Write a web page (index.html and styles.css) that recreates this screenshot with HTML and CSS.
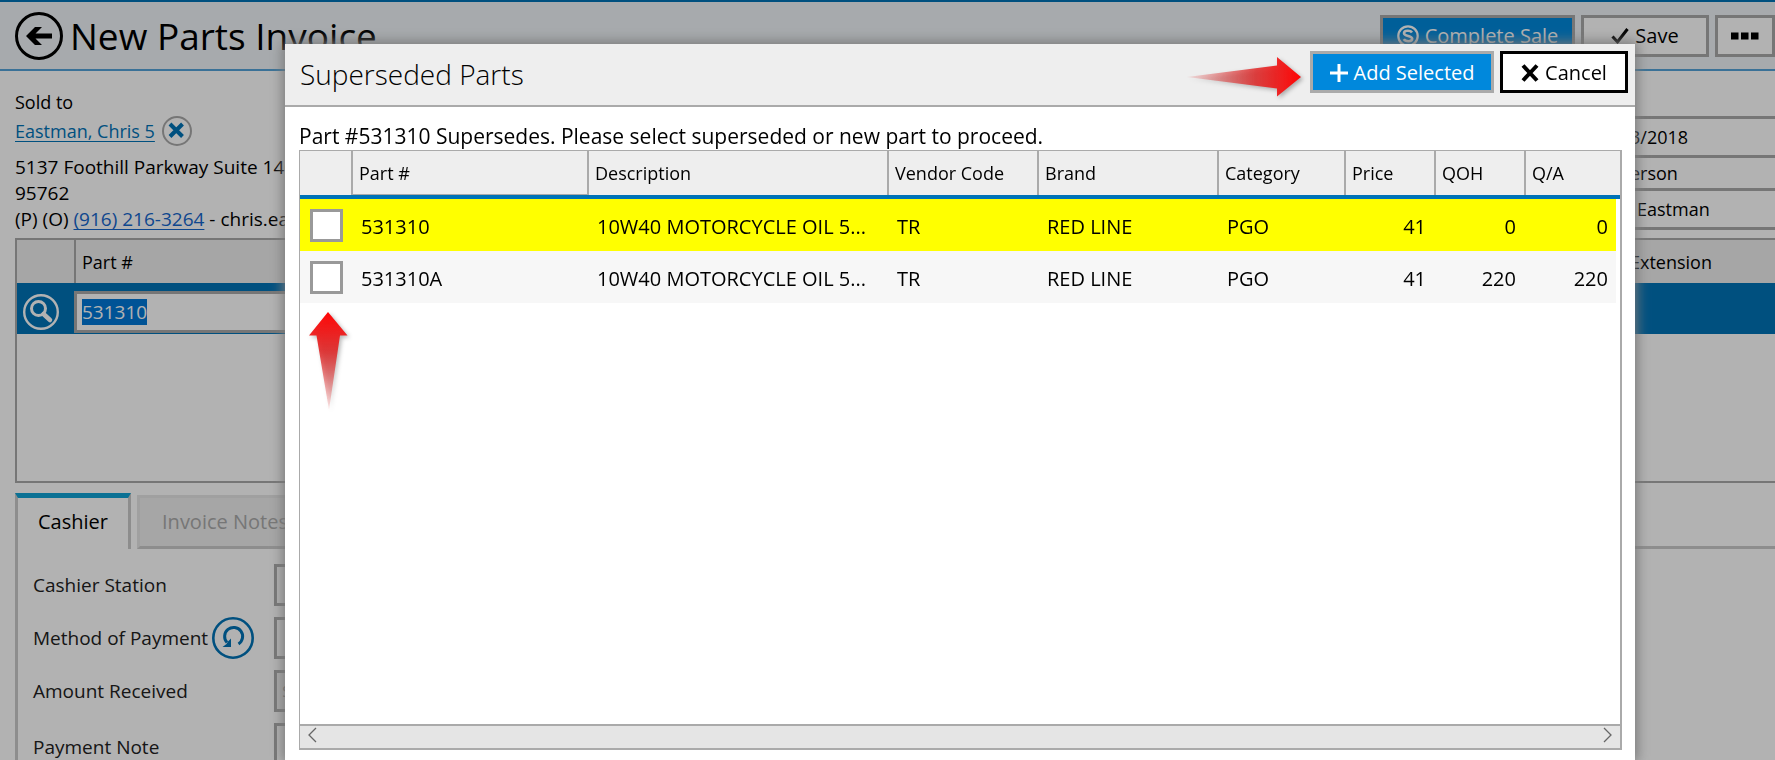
FILE: index.html
```html
<!DOCTYPE html>
<html lang="en">
<head>
<meta charset="utf-8">
<title>New Parts Invoice</title>
<link rel="stylesheet" href="styles.css">
</head>
<body>
<div class="page">
  <header class="page-header">
    <button class="icon-button" type="button" aria-label="Back">
      <svg width="48" height="48" viewBox="0 0 48 48"><circle cx="24" cy="24" r="22.500" fill="none" stroke="#000" stroke-width="3"/><path d="M11 24 L20 15 H27 L20.500 21.500 H37 V26.500 H20.500 L27 33 H20 Z"/></svg>
    </button>
    <h1 class="page-title">New Parts Invoice</h1>
    <div class="actions">
      <button class="button button-primary" type="button">
        <svg width="22" height="22" viewBox="0 0 22 22"><circle cx="11" cy="11" r="9.700" fill="none" stroke="#fff" stroke-width="2.200"/><path d="M15 7.500 C13.500 5 7 5 7 8.200 C7 11.500 15.200 10.500 15.200 13.800 C15.200 17 8.500 17 6.800 14.200" fill="none" stroke="#fff" stroke-width="2.600"/></svg>
        Complete Sale
      </button>
      <button class="button" type="button">
        <svg width="18" height="18" viewBox="0 0 18 18"><path d="M1.500 9.500 L6.500 15 L16.500 2" fill="none" stroke="#000" stroke-width="3"/></svg>
        Save
      </button>
      <button class="button button-more" type="button" aria-label="More">
        <svg width="28" height="8" viewBox="0 0 28 8"><path d="M0 0.500 H7.500 V7.500 H0 Z M10 0.500 H17.500 V7.500 H10 Z M20 0.500 H27.500 V7.500 H20 Z"/></svg>
      </button>
    </div>
  </header>

  <main class="page-body">
    <section class="summary">
      <div class="customer">
        <p class="line">Sold to</p>
        <div class="customer-name">
          <a class="link" href="#">Eastman, Chris 5</a>
          <button class="icon-button" type="button" aria-label="Remove customer">
            <svg width="30" height="30" viewBox="0 0 30 30"><circle cx="15" cy="15" r="14" fill="none" stroke="#aaa" stroke-width="2"/><path d="M8 8 L20.500 20.500 M20.500 8 L8 20.500" stroke="#0073b7" stroke-width="4"/></svg>
          </button>
        </div>
        <p class="line line-address">5137 Foothill Parkway Suite 140</p>
        <p class="line line-address">95762</p>
        <p class="line line-address">(P) (O) <a class="link link-phone" href="#">(916) 216-3264</a> - chris.ea</p>
      </div>
      <div class="details">
        <input class="detail" type="text" aria-label="Date" value="3/2018">
        <input class="detail detail-short" type="text" aria-label="Sales person" value="erson">
        <input class="detail detail-name" type="text" aria-label="Name" value="Eastman">
      </div>
    </section>

    <section class="lines">
      <table class="lines-table">
        <thead>
          <tr><th class="lines-tool"></th><th>Part #</th><th class="lines-extension">Extension</th></tr>
        </thead>
        <tbody>
          <tr>
            <td class="lines-search">
              <button class="icon-button" type="button" aria-label="Search">
                <svg width="36" height="36" viewBox="0 0 36 36" fill="none" stroke="#fff"><circle cx="18" cy="18" r="16.800" stroke-width="2.400"/><circle cx="15.500" cy="14.500" r="7" stroke-width="3"/><path d="M20.500 20 L27 26" stroke-width="4.500" stroke-linecap="round"/></svg>
              </button>
            </td>
            <td><div class="part-entry"><span class="part-selected">531310</span></div></td>
            <td></td>
          </tr>
        </tbody>
      </table>
    </section>

    <nav class="tabs">
      <button class="tab tab-active" type="button">Cashier</button>
      <button class="tab tab-idle" type="button">Invoice Notes</button>
      <span class="tabs-rest"></span>
    </nav>
    <section class="cashier">
      <label class="label" for="station">Cashier Station</label>
      <input class="field" id="station" type="text">
      <div class="label-group">
        <label class="label" for="method">Method of Payment</label>
        <button class="icon-button" type="button" aria-label="Reset payment">
          <svg width="42" height="42" viewBox="0 0 42 42" fill="none" stroke="#0073b7"><circle cx="21" cy="21" r="19.700" stroke-width="2.600"/><path d="M26.500 27 A9 9 0 1 0 15 25.500" stroke-width="3"/><path d="M10.500 30 H19 V21.500 L16 24.500 L14.500 27 Z" fill="#0073b7" stroke="none"/></svg>
        </button>
      </div>
      <input class="field" id="method" type="text">
      <label class="label" for="amount">Amount Received</label>
      <input class="field field-amount" id="amount" type="text" value="$">
      <label class="label" for="note">Payment Note</label>
      <input class="field field-note" id="note" type="text">
    </section>
  </main>
</div>

<div class="backdrop">
  <div class="modal" role="dialog" aria-labelledby="modal-title">
    <header class="modal-header">
      <h2 class="modal-title" id="modal-title">Superseded Parts</h2>
      <svg class="arrow" width="116" height="42" viewBox="0 0 116 42">
        <defs><linearGradient id="fade-right" x1="0" x2="1" y1="0" y2="0"><stop offset="0" stop-color="#e03030" stop-opacity="0.100"/><stop offset="0.600" stop-color="#e02828" stop-opacity="0.850"/><stop offset="1" stop-color="#ff0505"/></linearGradient></defs>
        <path d="M1 21 L91 9.500 V1 L115 21 L91 40.500 V32.500 Z" fill="url(#fade-right)"/>
      </svg>
      <button class="button button-primary button-add" type="button">
        <svg width="18" height="18" viewBox="0 0 18 18"><path d="M9 0 V18 M0 9 H18" stroke="#fff" stroke-width="3"/></svg>
        Add Selected
      </button>
      <button class="button button-cancel" type="button">
        <svg width="18" height="18" viewBox="0 0 18 18"><path d="M2 1.500 L16 16.500 M16 1.500 L2 16.500" stroke="#000" stroke-width="4"/></svg>
        Cancel
      </button>
    </header>
    <div class="modal-body">
      <p class="message">Part #531310 Supersedes. Please select superseded or new part to proceed.</p>
      <div class="grid">
        <div class="grid-content">
          <table class="parts">
            <colgroup>
              <col class="col-check"><col class="col-part"><col><col class="col-vendor"><col class="col-brand"><col class="col-category"><col class="col-number"><col class="col-number"><col class="col-last">
            </colgroup>
            <thead>
              <tr><th></th><th class="sorted">Part #</th><th>Description</th><th>Vendor Code</th><th>Brand</th><th>Category</th><th>Price</th><th>QOH</th><th>Q/A</th></tr>
            </thead>
            <tbody>
              <tr class="highlight"><td class="check-cell"><input class="check" type="checkbox" aria-label="Select 531310"></td><td>531310</td><td>10W40 MOTORCYCLE OIL 5...</td><td>TR</td><td>RED LINE</td><td>PGO</td><td class="number">41</td><td class="number">0</td><td class="number">0</td></tr>
              <tr><td class="check-cell"><input class="check" type="checkbox" aria-label="Select 531310A"></td><td>531310A</td><td>10W40 MOTORCYCLE OIL 5...</td><td>TR</td><td>RED LINE</td><td>PGO</td><td class="number">41</td><td class="number">220</td><td class="number">220</td></tr>
            </tbody>
          </table>
          <svg class="arrow arrow-up" width="42" height="102" viewBox="0 0 42 102">
            <defs><linearGradient id="fade-down" x1="0" x2="0" y1="0" y2="1"><stop offset="0" stop-color="#ff0505"/><stop offset="0.400" stop-color="#e02828" stop-opacity="0.900"/><stop offset="1" stop-color="#e03030" stop-opacity="0.100"/></linearGradient></defs>
            <path d="M20 1 L39.500 24.500 H32 L21 99 L8.500 24.500 H1 Z" fill="url(#fade-down)"/>
          </svg>
        </div>
        <div class="scrollbar">
          <svg width="9" height="16" viewBox="0 0 9 16"><path d="M8 1 L1 8 L8 15" fill="none" stroke="#666" stroke-width="1.300"/></svg>
          <svg width="9" height="16" viewBox="0 0 9 16"><path d="M1 1 L8 8 L1 15" fill="none" stroke="#666" stroke-width="1.300"/></svg>
        </div>
      </div>
    </div>
  </div>
</div>
</body>
</html>
```
FILE: styles.css
```css
* { box-sizing: border-box; }

body {
  margin: 0;
  height: 100vh;
  overflow: hidden;
  background: #fff;
  color: #000;
  font: 18px/26px "Open Sans", "Noto Sans", sans-serif;
}

h1, h2, p { margin: 0; font-weight: 400; }

button, input { font: inherit; color: inherit; border-radius: 0; }

.icon-button {
  display: block;
  padding: 0;
  border: 0;
  background: none;
}

.icon-button svg { display: block; }

.page { height: 100vh; overflow: hidden; }

.page-header {
  display: flex;
  align-items: center;
  height: 71px;
  padding-left: 15px;
  border-top: 2px solid #0073b7;
  border-bottom: 2px solid #53a3d8;
  background: #eff4f8;
}

.page-title {
  margin-left: 7px;
  font-size: 37px;
  line-height: 50px;
  white-space: nowrap;
}

.actions {
  display: flex;
  gap: 6px;
  margin-left: auto;
}

.button {
  display: flex;
  align-items: center;
  justify-content: center;
  gap: 6px;
  min-width: 128px;
  height: 42px;
  padding: 1px 12px 0;
  border: 3px solid #aaa;
  background: #fff;
  font-size: 20px;
  white-space: nowrap;
}

.button-primary { background: #0088dc; color: #fff; }
.button-more { min-width: 60px; }
.button-cancel { border-color: #000; }
.button-add { min-width: 184px; }
.actions .button-primary { min-width: 195px; }

.page-body { padding: 18px 0 0 15px; }

.summary {
  display: flex;
  justify-content: space-between;
  height: 149px;
}

.line { white-space: nowrap; }
.line-address { font-size: 19px; }

.customer-name {
  display: flex;
  align-items: center;
  gap: 7px;
  padding: 1px 0 8px;
}

.link { color: #0073b7; text-underline-offset: 3px; }
.link-phone { color: #1566cc; }

.details {
  display: flex;
  flex-direction: column;
  width: 160px;
  padding-top: 27px;
}

.detail {
  width: 100%;
  height: 39px;
  padding: 0 0 0 15px;
  border: 0;
  border-top: 3px solid #aaa;
  background: #fff;
}

.detail-short { height: 33px; }
.detail-name { height: 42px; padding-left: 22px; border-bottom: 3px solid #aaa; }

.lines {
  height: 245px;
  border: 2px solid #aaa;
  border-right: 0;
}

.lines-table {
  width: 100%;
  border-spacing: 0;
  table-layout: fixed;
}

.lines-table th {
  height: 43px;
  padding: 0 6px;
  background: #eee;
  font-weight: 400;
  text-align: left;
}

.lines-table th + th { border-left: 2px solid #aaa; }
.lines-table .lines-tool { width: 57px; }
.lines-table .lines-extension { width: 153px; }

.lines-table td {
  height: 51px;
  padding: 7px 0 0;
  background: #0073b7;
}

.lines-table .lines-search { padding-left: 6px; }

.part-entry {
  display: flex;
  align-items: center;
  height: 42px;
  padding-left: 5px;
  border: 3px solid #aaa;
  background: #fff;
  font-size: 19px;
}

.part-selected { background: #0078d7; color: #fff; }

.tabs {
  display: flex;
  height: 56px;
  margin-top: 10px;
}

.tab {
  padding: 0;
  font-size: 20px;
}

.tab-active {
  width: 116px;
  padding-bottom: 3px;
  border: 3px solid #cbcbcb;
  border-top: 5px solid #10a3d5;
  border-bottom: 0;
  background: #fff;
}

.tab-idle {
  width: 176px;
  margin-top: 2px;
  margin-left: 6px;
  border: 3px solid #e5e5e5;
  border-bottom-color: #cbcbcb;
  background: #eee;
  color: #aaa;
}

.tabs-rest { flex: 1; border-bottom: 3px solid #cbcbcb; }

.cashier {
  display: grid;
  grid-template-columns: 241px 400px;
  gap: 11px 0;
  align-items: center;
  padding: 15px 0 60px 15px;
  border-left: 3px solid #cbcbcb;
}

.label { color: #222; font-size: 19px; white-space: nowrap; }

.label-group {
  display: flex;
  align-items: center;
  gap: 4px;
}

.field {
  height: 42px;
  padding: 0 7px;
  border: 3px solid #aaa;
  background: #fff;
}

.field-amount { padding-left: 5px; background: #f2f2f2; color: #999; }
.field-note { height: 48px; }

.backdrop {
  position: fixed;
  inset: 0;
  padding: 44px 140px 0 285px;
  background: rgba(0, 0, 0, 0.3);
}

.modal {
  display: flex;
  flex-direction: column;
  height: 100%;
  background: #fff;
  box-shadow: 0 0 12px 2px #777;
}

.modal-header {
  display: flex;
  align-items: flex-start;
  gap: 6px;
  height: 63px;
  padding: 7px 7px 0 15px;
  border-bottom: 2px solid #aaa;
  background: #eee;
}

.modal-title {
  flex: 1;
  font-size: 28px;
  font-weight: 300;
  line-height: 46px;
}

.arrow { filter: drop-shadow(2px 2px 2px rgba(0, 0, 0, 0.3)); }
.modal-header .arrow { margin: 5px 2px 0 0; }

.modal-body {
  display: flex;
  flex: 1;
  flex-direction: column;
  padding: 15px 13px 10px 14px;
}

.message {
  font-size: 21px;
  line-height: 28px;
  white-space: nowrap;
}

.grid {
  display: flex;
  flex: 1;
  flex-direction: column;
  border: 2px solid #aaa;
  border-width: 1px 2px 2px 1px;
}

.grid-content {
  position: relative;
  flex: 1;
}

.parts {
  width: 100%;
  border-spacing: 0;
  table-layout: fixed;
}

.col-check { width: 51px; }
.col-part { width: 236px; }
.col-vendor { width: 150px; }
.col-brand { width: 180px; }
.col-category { width: 127px; }
.col-number { width: 90px; }
.col-last { width: 96px; }

.parts th {
  height: 48px;
  padding: 0 0 0 8px;
  border-bottom: 4px solid #0073b7;
  background: #eee;
  font-weight: 400;
  text-align: left;
}

.parts th + th {
  background: linear-gradient(#aaa, #aaa) left / 2px 100% no-repeat #eee;
}

.parts th + .sorted { box-shadow: inset 0 -1px #aaa; }

.parts td {
  height: 52px;
  padding: 3px 0 0 10px;
  overflow: hidden;
  background: #f7f7f7;
  font-size: 20px;
  white-space: nowrap;
}

.parts .highlight td { background: #ff0; }
.parts .number { padding-right: 8px; text-align: right; }
.parts td:last-child { border-right: 4px solid #fff; }
.parts .check-cell { padding: 0 0 0 10px; }

.check {
  display: block;
  width: 33px;
  height: 33px;
  margin: 0;
  border: 3px solid #999;
  background: #fff;
  appearance: none;
}

.arrow-up {
  position: absolute;
  top: 160px;
  left: 8px;
}

.scrollbar {
  display: flex;
  justify-content: space-between;
  height: 24px;
  padding: 1px 8px;
  border-top: 2px solid #aaa;
  background: #e5e5e5;
}
```
